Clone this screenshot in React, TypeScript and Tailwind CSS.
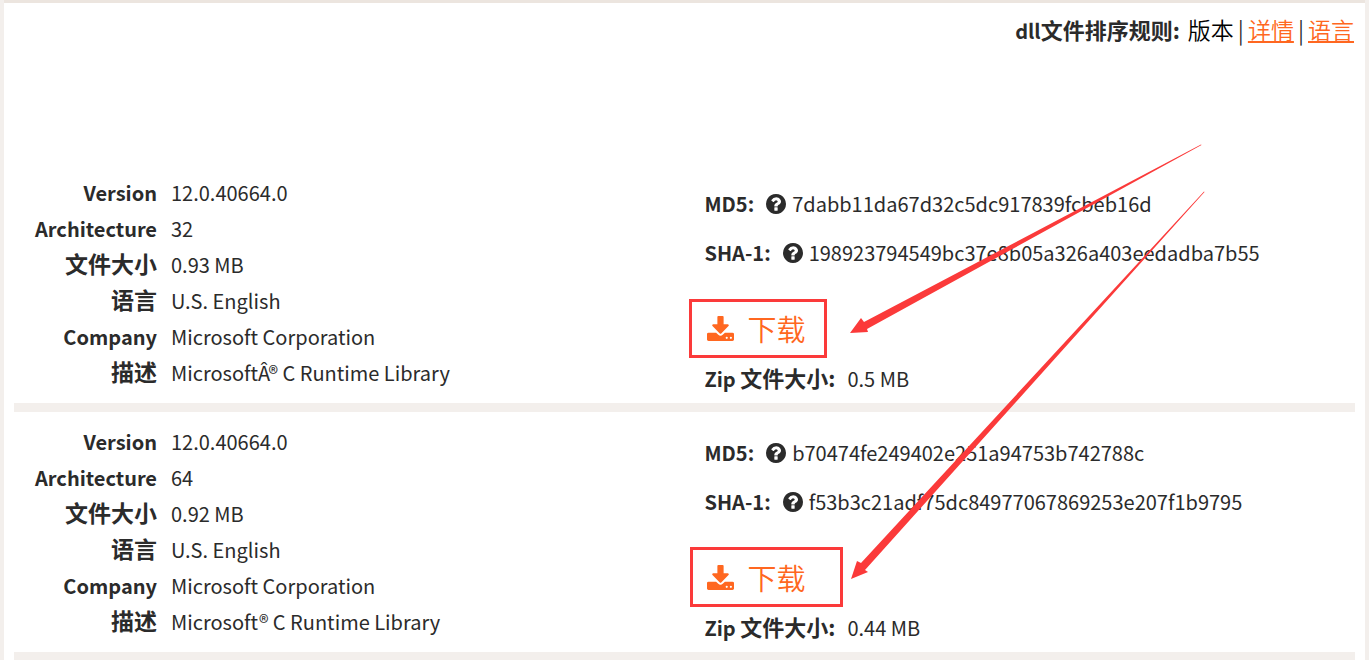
import React from 'react';

type DllFile = {
  version: string;
  architecture: string;
  size: string;
  language: string;
  company: string;
  description: string;
  md5: string;
  sha1: string;
  zipSize: string;
};

const files: DllFile[] = [
  {
    version: '12.0.40664.0',
    architecture: '32',
    size: '0.93 MB',
    language: 'U.S. English',
    company: 'Microsoft Corporation',
    description: 'MicrosoftÂ® C Runtime Library',
    md5: '7dabb11da67d32c5dc917839fcbeb16d',
    sha1: '198923794549bc37e8b05a326a403eedadba7b55',
    zipSize: '0.5 MB',
  },
  {
    version: '12.0.40664.0',
    architecture: '64',
    size: '0.92 MB',
    language: 'U.S. English',
    company: 'Microsoft Corporation',
    description: 'Microsoft® C Runtime Library',
    md5: 'b70474fe249402e251a94753b742788c',
    sha1: 'f53b3c21adf75dc84977067869253e207f1b9795',
    zipSize: '0.44 MB',
  },
];

function QuestionIcon() {
  return (
    <svg viewBox="128 128 1536 1536" className="w-5 h-5 fill-current" aria-hidden="true">
      <path d="M1024 1376v-192q0-14-9-23t-23-9h-192q-14 0-23 9t-9 23v192q0 14 9 23t23 9h192q14 0 23-9t9-23zm256-672q0-88-55.5-163t-138.5-116-170-41q-243 0-371 213-15 24 8 42l132 100q7 6 19 6 16 0 25-12 53-68 86-92 34-24 86-24 48 0 85.5 26t37.5 59q0 38-20 61t-68 45q-63 28-115.5 86.5t-52.5 125.5v36q0 14 9 23t23 9h192q14 0 23-9t9-23q0-19 21.5-49.5t54.5-49.5q32-18 49-28.5t46-35 44.5-48 28-60.5 12.5-81zm384 192q0 209-103 385.5t-279.5 279.5-385.5 103-385.5-103-279.5-279.5-103-385.5 103-385.5 279.5-279.5 385.5-103 385.5 103 279.5 279.5 103 385.5z" />
    </svg>
  );
}

function DownloadIcon() {
  return (
    <svg viewBox="64 0 1664 1536" className="w-[27px] h-[25px] fill-current" aria-hidden="true">
      <path d="M1344 1344q0-26-19-45t-45-19-45 19-19 45 19 45 45 19 45-19 19-45zm256 0q0-26-19-45t-45-19-45 19-19 45 19 45 45 19 45-19 19-45zm128-224v320q0 40-28 68t-68 28h-1472q-40 0-68-28t-28-68v-320q0-40 28-68t68-28h465l135 136q58 56 136 56t136-56l136-136h464q40 0 68 28t28 68zm-325-569q17 41-14 70l-448 448q-18 19-45 19t-45-19l-448-448q-31-29-14-70 17-39 59-39h256v-448q0-26 19-45t45-19h256q26 0 45 19t19 45v448h256q42 0 59 39z" />
    </svg>
  );
}

function Field({ label, value, cjk = false }: { label: string; value: string; cjk?: boolean }) {
  return (
    <div className="flex gap-[14px] h-9 items-baseline leading-9">
      <dt
        className={
          cjk ? 'w-[143px] text-right font-bold text-[23px] leading-8' : 'w-[143px] text-right font-bold'
        }
      >
        {label}
      </dt>
      <dd>{value}</dd>
    </div>
  );
}

function Hash({ label, value }: { label: string; value: string }) {
  return (
    <div className="flex items-center h-[49px]">
      <dt className="font-bold mr-3">{label}</dt>
      <dd className="flex items-center gap-[6px]">
        <button type="button" aria-label={`${label} ?`}>
          <QuestionIcon />
        </button>
        <span>{value}</span>
      </dd>
    </div>
  );
}

function FileRow({ file }: { file: DllFile }) {
  return (
    <section className="grid grid-cols-2 border-b-[9px] border-[#f3efec] h-[249px] pt-3">
      <dl>
        <Field label="Version" value={file.version} />
        <Field label="Architecture" value={file.architecture} />
        <Field label="文件大小" value={file.size} cjk />
        <Field label="语言" value={file.language} cjk />
        <Field label="Company" value={file.company} />
        <Field label="描述" value={file.description} cjk />
      </dl>
      <div className="pl-5 pt-1">
        <dl>
          <Hash label="MD5:" value={file.md5} />
          <Hash label="SHA-1:" value={file.sha1} />
        </dl>
        <a href="#download" className="flex w-fit items-center gap-[14px] h-[58px] mt-[22px] ml-[2px] text-[#ff6720]">
          <DownloadIcon />
          <span className="text-[29px] font-[350]">下载</span>
        </a>
        <p className="flex items-baseline gap-3 leading-10">
          <b>
            Zip <span className="text-[22px]">文件大小:</span>
          </b>
          <span>{file.zipSize}</span>
        </p>
      </div>
    </section>
  );
}

// Hand-drawn marks pointing at the two download links
function Annotations() {
  return (
    <svg
      width="1369"
      height="660"
      viewBox="0 0 1369 660"
      className="absolute top-0 left-0 max-w-none pointer-events-none"
      aria-hidden="true"
    >
      <g fill="none" stroke="#fb3a3a" strokeWidth="3">
        <rect x="690.5" y="300.5" width="135" height="56" />
        <rect x="691.5" y="548.5" width="150" height="57" />
      </g>
      <g fill="#fb3a3a">
        <polygon points="850,333 861,318 864,322 1201,144.5 1201.5,145 867,329 868,332" />
        <polygon points="851,579 857,561 861,563 1204,191.5 1204.5,192 865,570 868,572" />
      </g>
    </svg>
  );
}

export default function App() {
  return (
    <div className="relative bg-[#f3efec] px-1 h-screen overflow-hidden font-['Noto_Sans_CJK_SC',sans-serif] text-[20px] leading-7 text-[#2b2b2b]">
      <main className="bg-white border-t-[3px] border-[#ece5df] px-[10px]">
        <header className="flex justify-end items-baseline h-[52px] leading-[52px] mb-[108px] pr-px">
          <b className="mr-2">
            dll<span className="text-[22px]">文件排序规则:</span>
          </b>
          <nav className="flex items-baseline gap-1 text-[23px] font-[350]">
            <span className="text-black">版本</span>
            <span>|</span>
            <a href="#details" className="text-[#ff6720] underline">
              详情
            </a>
            <span>|</span>
            <a href="#language" className="text-[#ff6720] underline">
              语言
            </a>
          </nav>
        </header>
        {files.map((file) => (
          <FileRow key={file.md5} file={file} />
        ))}
      </main>
      <Annotations />
    </div>
  );
}
